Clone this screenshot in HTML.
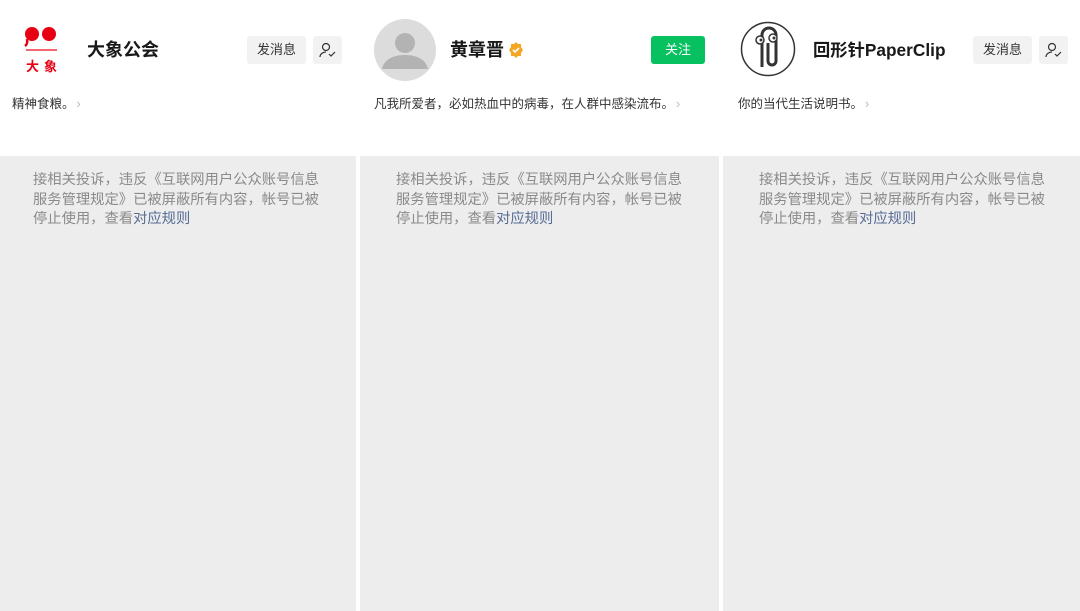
<!DOCTYPE html>
<html><head><meta charset="utf-8"><style>
*{margin:0;padding:0;box-sizing:border-box}
body{width:1080px;height:611px;background:#fff;position:relative;overflow:hidden;font-family:"Liberation Sans","Noto Sans CJK SC",sans-serif}
.col{position:absolute;top:0;width:356px;height:611px;background:#fff}
.gray{position:absolute;top:156px;left:0;right:0;bottom:0;background:#ededed}
.msg{position:absolute;left:33px;top:15px;width:292px;font-size:14.3px;line-height:19.5px;color:#8a8a8a}
.msg a{color:#576b95;text-decoration:none}
.name{position:absolute;top:36px;font-size:18px;font-weight:bold;color:#191919;line-height:28px}
.desc{position:absolute;left:12px;top:95px;font-size:12.5px;color:#333;line-height:18px}
.desc i{font-style:normal;color:#bbb;margin-left:2px}
.btn{position:absolute;top:36px;height:28px;background:#f2f2f2;border-radius:3px;font-size:13px;color:#333;line-height:28px;text-align:center}
</style></head><body>

<div class="col" style="left:0">
  <svg style="position:absolute;left:22px;top:24px" width="40" height="52" viewBox="0 0 40 52">
    <circle cx="10" cy="10" r="7" fill="#e60012"/><circle cx="27" cy="10" r="7" fill="#e60012"/>
    <path d="M5 15 Q6 20 3 22" stroke="#e60012" stroke-width="2.5" fill="none"/>
    <rect x="4" y="25" width="31" height="2" fill="#e60012" opacity=".6"/>
    <text x="4" y="47" font-size="13" font-weight="bold" fill="#e60012" font-family="Noto Sans CJK SC,sans-serif">大</text>
    <text x="22" y="47" font-size="13" font-weight="bold" fill="#e60012" font-family="Noto Sans CJK SC,sans-serif">象</text>
  </svg>
  <div class="name" style="left:87px">大象公会</div>
  <div class="btn" style="left:247px;width:59px">发消息</div>
  <div class="btn" style="left:313px;width:29px"><svg width="18" height="18" viewBox="0 0 18 18" style="margin-top:5px"><circle cx="7" cy="6" r="3.5" fill="none" stroke="#333" stroke-width="1.2"/><path d="M1 16c0-3 3-5 6-5M10 13l2 2 4-4" fill="none" stroke="#333" stroke-width="1.2"/></svg></div>
  <div class="desc">精神食粮。<i>›</i></div>
  <div class="gray"><div class="msg">接相关投诉，违反《互联网用户公众账号信息服务管理规定》已被屏蔽所有内容，帐号已被停止使用，查看<a>对应规则</a></div></div>
</div>

<div class="col" style="left:360px;width:359px">
  <svg style="position:absolute;left:14px;top:19px" width="62" height="62" viewBox="0 0 62 62"><circle cx="31" cy="31" r="31" fill="#dcdcdc"/><circle cx="31" cy="24" r="10" fill="#b3b3b3"/><path d="M8 50c2-10 12-14 23-14s21 4 23 14z" fill="#b3b3b3"/></svg>
  <div class="name" style="left:90px">黄章晋</div>
  <svg style="position:absolute;left:148px;top:42px" width="16" height="16" viewBox="0 0 16 16"><path d="M8 0l2 2h3v3l2 3-2 3v3h-3l-2 2-2-2H3v-3L1 8l2-3V2h3z" fill="#f5a623"/><path d="M5 8l2 2 4-4" stroke="#fff" stroke-width="1.6" fill="none"/></svg>
  <div style="position:absolute;left:291px;top:36px;width:54px;height:28px;background:#07c160;border-radius:3px;color:#fff;font-size:13px;line-height:28px;text-align:center">关注</div>
  <div class="desc" style="left:14px">凡我所爱者，必如热血中的病毒，在人群中感染流布。<i>›</i></div>
  <div class="gray"><div class="msg" style="left:36px">接相关投诉，违反《互联网用户公众账号信息服务管理规定》已被屏蔽所有内容，帐号已被停止使用，查看<a>对应规则</a></div></div>
</div>

<div class="col" style="left:723px;width:357px">
  <svg style="position:absolute;left:17px;top:21px" width="56" height="56" viewBox="0 0 56 56"><circle cx="28" cy="28" r="26.5" fill="#fff" stroke="#333" stroke-width="1.5"/>
    <path d="M22 46V14a7 7 0 0 1 14 0v26a4 4 0 0 1-8 0V22" fill="none" stroke="#333" stroke-width="3"/>
    <circle cx="20" cy="19" r="4" fill="#fff" stroke="#333" stroke-width="1.5"/><circle cx="33" cy="17" r="4" fill="#fff" stroke="#333" stroke-width="1.5"/>
    <circle cx="21" cy="19" r="1.5" fill="#333"/><circle cx="34" cy="17" r="1.5" fill="#333"/></svg>
  <div class="name" style="left:90px;font-size:17.3px">回形针PaperClip</div>
  <div class="btn" style="left:250px;width:59px">发消息</div>
  <div class="btn" style="left:316px;width:29px"><svg width="18" height="18" viewBox="0 0 18 18" style="margin-top:5px"><circle cx="7" cy="6" r="3.5" fill="none" stroke="#333" stroke-width="1.2"/><path d="M1 16c0-3 3-5 6-5M10 13l2 2 4-4" fill="none" stroke="#333" stroke-width="1.2"/></svg></div>
  <div class="desc" style="left:15px">你的当代生活说明书。<i>›</i></div>
  <div class="gray"><div class="msg" style="left:36px">接相关投诉，违反《互联网用户公众账号信息服务管理规定》已被屏蔽所有内容，帐号已被停止使用，查看<a>对应规则</a></div></div>
</div>
</body></html>
